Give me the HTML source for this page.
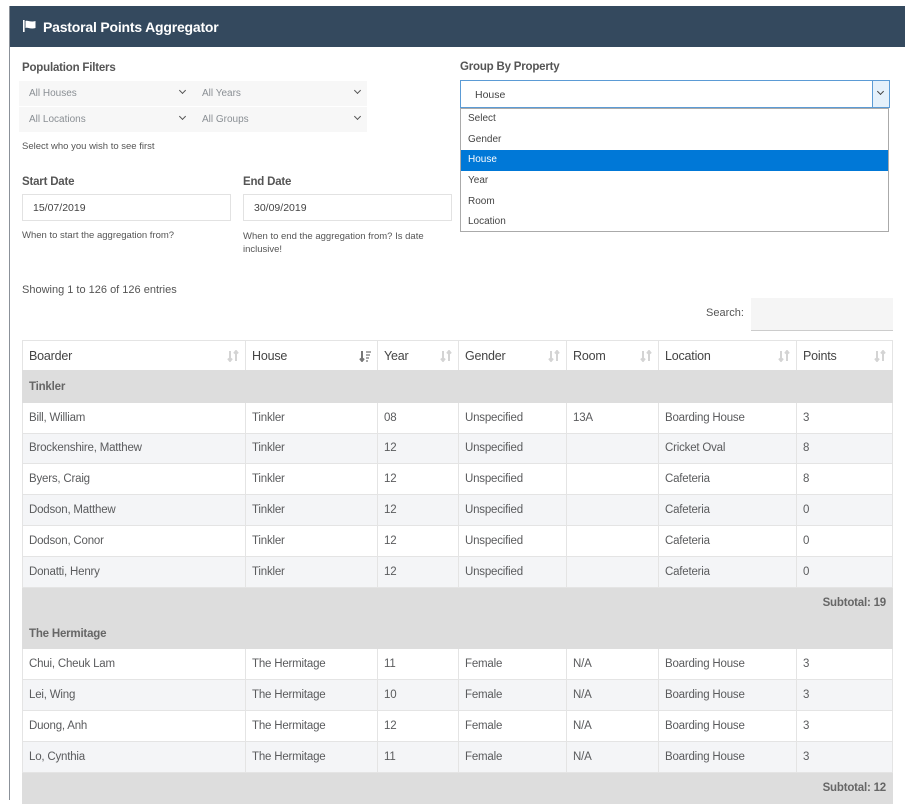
<!DOCTYPE html>
<html><head><meta charset="utf-8"><style>
*{box-sizing:border-box;margin:0;padding:0}
body{width:905px;height:800px;overflow:hidden;background:#fff;font-family:"Liberation Sans",sans-serif;color:#58595b;position:relative}
.a{position:absolute;white-space:nowrap}
.hdr{left:10px;top:6px;width:895px;height:41px;background:#34495e;color:#fff;font-weight:bold;font-size:14px;padding:13px 0 0 33px;letter-spacing:-0.2px}
.lb{position:absolute;left:9px;top:6px;width:1px;height:794px;background:#8b9199}
.lbl{font-weight:bold;font-size:11.5px;color:#555;letter-spacing:-0.2px}
.sel{background:#f7f7f7;font-size:10px;color:#8a8f94;height:25px;padding:7px 0 0 10px}
.chev{position:absolute;right:7px;top:7px;width:5px;height:5px;border-right:1.3px solid #555;border-bottom:1.3px solid #555;transform:rotate(45deg)}
.help{font-size:9.5px;color:#555}
.inp{border:1px solid #e2e2e2;height:27px;font-size:10.5px;padding:7px 0 0 10px;color:#444}
table{position:absolute;left:22px;top:340px;width:871px;border-collapse:collapse;font-size:11.5px;letter-spacing:-0.2px}
td,th{height:30.85px;padding:0 6px;text-align:left;border:1px solid #e4e4e4}
th{font-size:12.5px;font-weight:normal;color:#444;position:relative;border-bottom:2px solid #ddd}
th svg{position:absolute;right:6px;top:9px}
tr.g td{background:#ddd;font-weight:bold;color:#666;border-color:#ddd}
tr.st td{background:#ddd;font-weight:bold;color:#666;text-align:right;border-color:#ddd}
tr.o td{background:#f4f5f7}
td{color:#5a5b5d}
.dd{left:460px;top:108px;width:429px;height:124px;border:1px solid #aaa;background:#fff;font-size:10px;color:#444}
.dd div{height:20.7px;padding:4px 0 0 7px}
</style></head><body>
<svg width="0" height="0" style="position:absolute"><defs>
<symbol id="srt" viewBox="0 0 12 12"><path d="M3 1v10M1 8.5l2 2.5 2-2.5M9 11V1M7 3.5l2-2.5 2 2.5" stroke="#d4d4d4" stroke-width="2" fill="none"/></symbol>
<symbol id="srd" viewBox="0 0 12 12"><path d="M3 1v10M1 8.5l2 2.5 2-2.5" stroke="#777" stroke-width="2" fill="none"/><path d="M7 2h5M7 5h4M7 8h3M7 11h2" stroke="#777" stroke-width="1.3"/></symbol>
</defs></svg>
<div class="lb"></div>
<div class="a hdr"><svg style="position:absolute;left:13px;top:14px" width="14" height="12" viewBox="0 0 14 12"><rect x="0" y="0" width="1.6" height="12" fill="#fff"/><path d="M2.5 1 C5 0,7 2.5,12.5 1 L12.5 8 C7 9.5,5 7,2.5 8 Z" fill="#fff"/></svg>Pastoral Points Aggregator</div>

<div class="a lbl" style="left:22px;top:62px">Population Filters</div>
<div class="a sel" style="left:19px;top:81px;width:173px">All Houses<span class="chev"></span></div>
<div class="a sel" style="left:192px;top:81px;width:175px">All Years<span class="chev"></span></div>
<div class="a sel" style="left:19px;top:107px;width:173px">All Locations<span class="chev"></span></div>
<div class="a sel" style="left:192px;top:107px;width:175px">All Groups<span class="chev"></span></div>
<div class="a help" style="left:22px;top:141px">Select who you wish to see first</div>

<div class="a lbl" style="left:22px;top:176px">Start Date</div>
<div class="a lbl" style="left:243px;top:176px">End Date</div>
<div class="a inp" style="left:22px;top:194px;width:209px">15/07/2019</div>
<div class="a inp" style="left:243px;top:194px;width:209px">30/09/2019</div>
<div class="a help" style="left:22px;top:230px">When to start the aggregation from?</div>
<div class="a help" style="left:243px;top:230px;line-height:13px">When to end the aggregation from? Is date<br>inclusive!</div>

<div class="a lbl" style="left:460px;top:61px">Group By Property</div>
<div class="a" style="left:460px;top:80px;width:430px;height:28px;border:1px solid #5b9bd5;font-size:10.5px;color:#444;padding:8px 0 0 14px">House<div style="position:absolute;right:0;top:0;width:17px;height:26px;background:#e5f1fb;border-left:1px solid #5b9bd5"><span style="position:absolute;left:5px;top:8px;width:5px;height:5px;border-right:1px solid #444;border-bottom:1px solid #444;transform:rotate(45deg)"></span></div></div>
<div class="a dd"><div>Select</div><div>Gender</div><div style="background:#0078d7;color:#fff">House</div><div>Year</div><div>Room</div><div>Location</div></div>

<div class="a" style="left:22px;top:284px;font-size:11px;color:#555">Showing 1 to 126 of 126 entries</div>
<div class="a" style="left:706px;top:307px;font-size:11px;color:#555">Search:</div>
<div class="a" style="left:751px;top:298px;width:142px;height:33px;background:#f5f5f5;border-bottom:1px solid #ccc"></div>

<table>
<tr><th style="width:223px">Boarder<svg width="12" height="12"><use href="#srt"/></svg></th><th style="width:132px">House<svg width="12" height="12"><use href="#srd"/></svg></th><th style="width:81px">Year<svg width="12" height="12"><use href="#srt"/></svg></th><th style="width:108px">Gender<svg width="12" height="12"><use href="#srt"/></svg></th><th style="width:92px">Room<svg width="12" height="12"><use href="#srt"/></svg></th><th style="width:138px">Location<svg width="12" height="12"><use href="#srt"/></svg></th><th>Points<svg width="12" height="12"><use href="#srt"/></svg></th></tr>
<tr class="g"><td colspan="7">Tinkler</td></tr>
<tr><td>Bill, William</td><td>Tinkler</td><td>08</td><td>Unspecified</td><td>13A</td><td>Boarding House</td><td>3</td></tr>
<tr class="o"><td>Brockenshire, Matthew</td><td>Tinkler</td><td>12</td><td>Unspecified</td><td></td><td>Cricket Oval</td><td>8</td></tr>
<tr><td>Byers, Craig</td><td>Tinkler</td><td>12</td><td>Unspecified</td><td></td><td>Cafeteria</td><td>8</td></tr>
<tr class="o"><td>Dodson, Matthew</td><td>Tinkler</td><td>12</td><td>Unspecified</td><td></td><td>Cafeteria</td><td>0</td></tr>
<tr><td>Dodson, Conor</td><td>Tinkler</td><td>12</td><td>Unspecified</td><td></td><td>Cafeteria</td><td>0</td></tr>
<tr class="o"><td>Donatti, Henry</td><td>Tinkler</td><td>12</td><td>Unspecified</td><td></td><td>Cafeteria</td><td>0</td></tr>
<tr class="st"><td colspan="7">Subtotal: 19</td></tr>
<tr class="g"><td colspan="7">The Hermitage</td></tr>
<tr><td>Chui, Cheuk Lam</td><td>The Hermitage</td><td>11</td><td>Female</td><td>N/A</td><td>Boarding House</td><td>3</td></tr>
<tr class="o"><td>Lei, Wing</td><td>The Hermitage</td><td>10</td><td>Female</td><td>N/A</td><td>Boarding House</td><td>3</td></tr>
<tr><td>Duong, Anh</td><td>The Hermitage</td><td>12</td><td>Female</td><td>N/A</td><td>Boarding House</td><td>3</td></tr>
<tr class="o"><td>Lo, Cynthia</td><td>The Hermitage</td><td>11</td><td>Female</td><td>N/A</td><td>Boarding House</td><td>3</td></tr>
<tr class="st"><td colspan="7">Subtotal: 12</td></tr>
</table>
</body></html>
